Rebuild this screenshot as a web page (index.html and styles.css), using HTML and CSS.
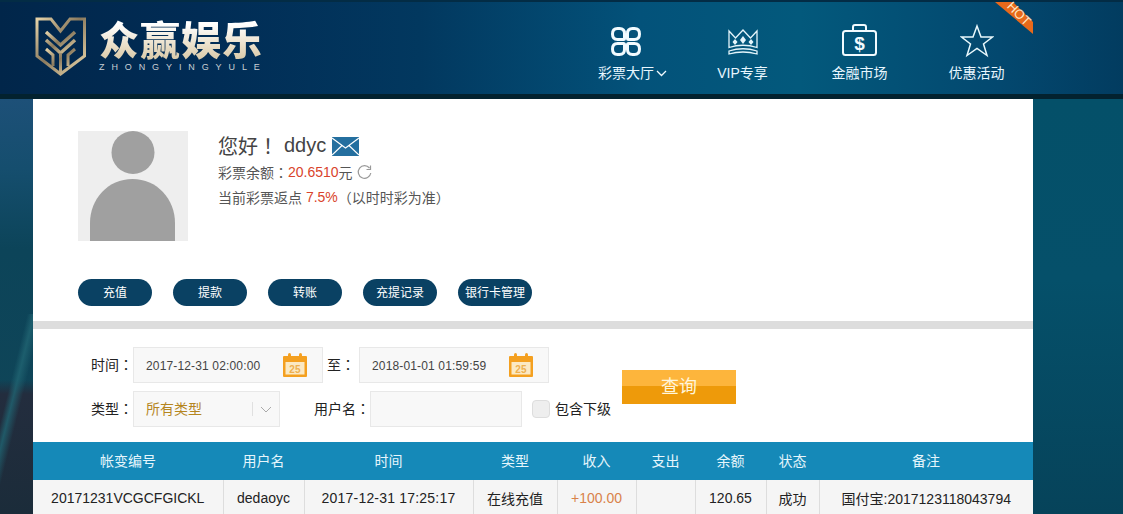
FILE: index.html
```html
<!DOCTYPE html>
<html lang="zh-CN">
<head>
<meta charset="utf-8">
<title>众赢娱乐</title>
<link rel="stylesheet" href="styles.css">
</head>
<body>
<div class="page">
  <header class="header">
    <div class="logo">
      <svg class="logo-mark" width="52" height="60" viewBox="0 0 52 60">
        <defs>
          <linearGradient id="gold" x1="0" y1="0" x2="1" y2="1">
            <stop offset="0" stop-color="#e6d3a8"/>
            <stop offset=".45" stop-color="#8a7a5e"/>
            <stop offset="1" stop-color="#efdcae"/>
          </linearGradient>
        </defs>
        <path d="M2 2H16L25.500 14L35 2H49.500V39L25.500 57L2 39Z" fill="none" stroke="url(#gold)" stroke-width="3"/>
        <path d="M11 15L25.500 28L40 15M11 23L25.500 36L40 23" fill="none" stroke="url(#gold)" stroke-width="3.500"/>
        <path d="M11 32L18 38V49M40 32L33 38V49M25.500 36V56" fill="none" stroke="url(#gold)" stroke-width="3"/>
      </svg>
      <div class="logo-text">
        <div class="logo-name">众赢娱乐</div>
        <div class="logo-sub">ZHONGYINGYULE</div>
      </div>
    </div>
    <nav class="nav">
      <a class="nav-item">
        <svg class="nav-icon" width="34" height="34" viewBox="0 0 34 34">
          <g fill="none" stroke="#f2fbff" stroke-width="3">
            <path d="M8.500 4.500H10.500Q15.500 4.500 15.500 9.500V14.500Q15.500 15.500 14.500 15.500H8.500Q3.500 15.500 3.500 10Q3.500 4.500 8.500 4.500Z"/>
            <path d="M25.500 4.500H23.500Q18.500 4.500 18.500 9.500V14.500Q18.500 15.500 19.500 15.500H25.500Q30.500 15.500 30.500 10Q30.500 4.500 25.500 4.500Z"/>
            <path d="M8.500 30.500H10.500Q15.500 30.500 15.500 25.500V20.500Q15.500 19.500 14.500 19.500H8.500Q3.500 19.500 3.500 25Q3.500 30.500 8.500 30.500Z"/>
            <path d="M25.500 30.500H23.500Q18.500 30.500 18.500 25.500V20.500Q18.500 19.500 19.500 19.500H25.500Q30.500 19.500 30.500 25Q30.500 30.500 25.500 30.500Z"/>
          </g>
        </svg>
        <span class="nav-label nav-label-caret">彩票大厅<svg class="caret" width="11" height="7" viewBox="0 0 11 7"><path d="M1 1L5.500 5.500L10 1" fill="none" stroke="#f2fbff" stroke-width="1.300"/></svg></span>
      </a>
      <a class="nav-item">
        <svg class="nav-icon" width="34" height="34" viewBox="0 0 34 34">
          <g fill="none" stroke="#e4f5fb" stroke-width="1.300">
            <path d="M3 7L9.500 14L17 6L24.500 14L31 7V23.500Q17 19 3 23.500Z"/>
            <path d="M3 27Q17 22.500 31 27V30Q17 26 3 30Z"/>
          </g>
          <g fill="#e4f5fb">
            <path d="M17 12L20 16L17 20L14 16Z"/>
            <path d="M9 15L11.500 18L9 21L6.500 18Z"/>
            <path d="M25 15L27.500 18L25 21L22.500 18Z"/>
          </g>
        </svg>
        <span class="nav-label">VIP专享</span>
      </a>
      <a class="nav-item">
        <svg class="nav-icon" width="37" height="34" viewBox="0 0 37 34">
          <g fill="none" stroke="#f2fbff" stroke-width="2">
            <rect x="2" y="7" width="33" height="24" rx="2.500"/>
            <path d="M12 7V3Q12 1 14 1H23Q25 1 25 3V7"/>
          </g>
          <text class="dollar" x="18.500" y="26" text-anchor="middle">$</text>
        </svg>
        <span class="nav-label">金融市场</span>
      </a>
      <a class="nav-item">
        <svg class="nav-icon" width="34" height="34" viewBox="0 0 34 34">
          <path d="M17 2L21 13H32.500L23.500 20L27 31.500L17 24.500L7 31.500L10.500 20L1.500 13H13Z" fill="none" stroke="#e9f8fc" stroke-width="1.500"/>
        </svg>
        <span class="nav-label">优惠活动</span>
      </a>
      <div class="hot"><span class="hot-text">HOT</span></div>
    </nav>
  </header>

  <main class="card">
    <section class="profile">
      <div class="profile-top">
        <svg class="avatar" width="110" height="110" viewBox="0 0 110 110">
          <rect width="110" height="110" fill="#eeeeee"/>
          <circle cx="55" cy="21.500" r="21.500" fill="#a0a0a0"/>
          <path d="M12 110V92C12 68 30 48 54.500 48C79 48 97 68 97 92V110Z" fill="#a0a0a0"/>
        </svg>
        <div class="info">
          <div class="hello">您好<span class="punct" lang="zh-TW">！</span><span class="uname">ddyc</span>
            <svg class="mail" width="27" height="19" viewBox="0 0 27 19">
              <rect width="27" height="19" fill="#246f9f"/>
              <path d="M0 1L13.500 11L27 1M0 18L10 8.500M27 18L17 8.500" fill="none" stroke="#fff" stroke-width="1.200"/>
            </svg>
          </div>
          <div class="line">彩票余额<span class="punct" lang="zh-TW">：</span><span class="red">20.6510</span>元<svg class="refresh" width="15" height="15" viewBox="0 0 15 15"><path d="M12.500 3A6.300 6.300 0 1 0 13.800 8" fill="none" stroke="#999" stroke-width="1.200"/><path d="M13.500 0.500V4.500H9.500" fill="none" stroke="#999" stroke-width="1.200"/></svg></div>
          <div class="line">当前彩票返点 <span class="red">7.5%</span><span class="punct" lang="zh-TW">（</span>以时时彩为准<span class="punct" lang="zh-TW">）</span></div>
        </div>
      </div>
      <div class="actions">
        <a class="pill">充值</a>
        <a class="pill">提款</a>
        <a class="pill">转账</a>
        <a class="pill">充提记录</a>
        <a class="pill">银行卡管理</a>
      </div>
    </section>

    <section class="filter">
      <div class="filter-rows">
        <div class="row">
          <label class="lbl lbl-sm">时间<span class="punct" lang="zh-TW">：</span></label>
          <div class="field date">
            <span>2017-12-31 02:00:00</span>
            <svg class="cal" width="28" height="28" viewBox="0 0 28 28"><rect x="2" y="5" width="24" height="21" fill="#f4a020" rx="1"/><rect x="4.500" y="11" width="19" height="12.500" fill="#fbe9c4"/><rect x="7" y="2" width="3" height="6" rx="1.500" fill="#f4a020"/><rect x="18" y="2" width="3" height="6" rx="1.500" fill="#f4a020"/><text class="cal-num" x="14" y="22" text-anchor="middle">25</text></svg>
          </div>
          <label class="lbl lbl-to">至<span class="punct" lang="zh-TW">：</span></label>
          <div class="field date">
            <span>2018-01-01 01:59:59</span>
            <svg class="cal" width="28" height="28" viewBox="0 0 28 28"><rect x="2" y="5" width="24" height="21" fill="#f4a020" rx="1"/><rect x="4.500" y="11" width="19" height="12.500" fill="#fbe9c4"/><rect x="7" y="2" width="3" height="6" rx="1.500" fill="#f4a020"/><rect x="18" y="2" width="3" height="6" rx="1.500" fill="#f4a020"/><text class="cal-num" x="14" y="22" text-anchor="middle">25</text></svg>
          </div>
        </div>
        <div class="row">
          <label class="lbl lbl-sm">类型<span class="punct" lang="zh-TW">：</span></label>
          <div class="field select">
            <span class="select-val">所有类型</span>
            <span class="select-arrow"><svg width="12" height="7" viewBox="0 0 12 7"><path d="M1 1L6 6L11 1" fill="none" stroke="#aaa" stroke-width="1"/></svg></span>
          </div>
          <label class="lbl lbl-user">用户名<span class="punct" lang="zh-TW">：</span></label>
          <div class="field user"></div>
          <span class="check"></span>
          <span class="check-text">包含下级</span>
        </div>
      </div>
      <button class="search">查询</button>
    </section>

    <table class="tbl">
      <colgroup>
        <col class="c1"><col class="c2"><col class="c3"><col class="c4"><col class="c5"><col class="c6"><col class="c7"><col class="c8"><col class="c9">
      </colgroup>
      <thead>
        <tr><th>帐变编号</th><th>用户名</th><th>时间</th><th>类型</th><th>收入</th><th>支出</th><th>余额</th><th>状态</th><th>备注</th></tr>
      </thead>
      <tbody>
        <tr><td>20171231VCGCFGICKL</td><td>dedaoyc</td><td class="td-time">2017-12-31 17:25:17</td><td>在线充值</td><td class="income">+100.00</td><td></td><td>120.65</td><td>成功</td><td>国付宝:2017123118043794</td></tr>
      </tbody>
    </table>
  </main>
</div>
</body>
</html>
```
FILE: styles.css
```css
* { box-sizing: border-box; }
html, body { margin: 0; padding: 0; }
body {
  font-family: "Liberation Sans", "Noto Sans CJK SC", sans-serif;
  font-size: 14px;
  color: #333;
  background-color: #06506a;
}
.punct { font-family: "Noto Sans CJK TC", sans-serif; }
.page {
  height: 514px;
  overflow: hidden;
  background:
    linear-gradient(104deg, transparent 33%, rgba(32, 100, 114, .8) 41%, transparent 52%) 0 314px / 33px 200px no-repeat,
    linear-gradient(180deg, rgba(35, 45, 62, 0) 0, #232d3e 14px, #1b2c3a 100%) 0 380px / 33px 134px no-repeat,
    linear-gradient(180deg, #1d5078 0, #154e6e 70px, #0c4459 150px, #0f4558 100%) 0 99px / 33px 300px no-repeat,
    linear-gradient(180deg, #045069 0, #05506a 180px, #06435a 100%) 33px 99px / 1090px 415px no-repeat;
}

/* Header */
.header {
  height: 99px;
  display: flex;
  justify-content: space-between;
  border-top: 2px solid #032c45;
  border-bottom: 5px solid #03222f;
  background: linear-gradient(90deg, #01264a 0, #012c55 200px, #02385f 420px, #03527a 640px, #03597c 800px, #03486f 1000px, #023c60 100%);
}
.logo { display: flex; padding: 15px 0 0 35px; }
.logo-mark { flex: none; }
.logo-text { margin-left: 12px; margin-top: -2px; }
.logo-name {
  width: 170px;
  font-family: "Noto Sans CJK SC", sans-serif;
  font-weight: 900;
  font-size: 40px;
  line-height: 46px;
  letter-spacing: 1px;
  white-space: nowrap;
  background: linear-gradient(180deg, #ffffff 20%, #e8dcc4 70%, #d8c8a6 100%);
  -webkit-background-clip: text;
  background-clip: text;
  color: transparent;
}
.logo-sub {
  font-size: 9px;
  line-height: 10px;
  margin-top: 1px;
  letter-spacing: 6.900px;
  color: #c9cfd4;
  white-space: nowrap;
}
.nav { position: relative; display: flex; padding: 22px 0 0; margin-right: 88px; }
.nav-item { width: 117px; display: flex; flex-direction: column; align-items: center; color: #e8f7ff; }
.nav-icon { display: block; height: 34px; }
.nav-label { display: flex; align-items: center; margin-top: 5px; font-size: 14px; line-height: 20px; white-space: nowrap; }
.nav-label-caret { margin-left: 14px; }
.caret { margin-left: 2px; }
.dollar { font: bold 19px "Liberation Sans", sans-serif; fill: #f2fbff; }
.hot {
  position: absolute;
  top: 0;
  right: 2px;
  width: 38px;
  height: 32px;
}
.hot::before {
  content: "";
  position: absolute;
  inset: 0;
  background: #e8691b;
  clip-path: polygon(0 0, 18px 0, 38px 20px, 38px 32px);
}
.hot-text {
  position: absolute;
  top: 5px;
  left: 10px;
  font-size: 13px;
  line-height: 14px;
  color: #ffe9c9;
  transform: rotate(45deg);
}

/* Card */
.card { width: 1000px; margin-left: 33px; background: #fff; height: 415px; }
.profile { padding: 32px 45px 15px; }
.profile-top { display: flex; gap: 30px; }
.avatar { display: block; flex: none; }
.hello { display: flex; align-items: center; height: 28px; font-size: 20px; color: #444; white-space: pre; }
.uname { font-size: 20px; margin-left: 6px; }
.mail { margin-left: 6px; margin-top: 2px; }
.line { display: flex; align-items: center; height: 25px; font-size: 14px; color: #555; white-space: pre; }
.red { color: #d9432b; }
.refresh { margin: 2px 0 0 4px; }
.actions { display: flex; gap: 21px; margin-top: 38px; }
.pill {
  width: 74px;
  height: 27px;
  border-radius: 14px;
  background: #0a4163;
  color: #fff;
  font-size: 12px;
  line-height: 29px;
  text-align: center;
  white-space: nowrap;
}

/* Filter */
.filter {
  display: flex;
  align-items: center;
  border-top: 8px solid #dddddd;
  padding: 18px 0 15px 58px;
}
.filter-rows { width: 520px; display: flex; flex-direction: column; gap: 8px; }
.row { display: flex; align-items: center; height: 36px; }
.lbl { flex: none; color: #222; font-size: 14px; white-space: nowrap; padding-bottom: 3px; }
.lbl-sm { width: 42px; }
.lbl-to { width: 32px; margin-left: 4px; }
.lbl-user { width: 56px; margin-left: 34px; }
.field { flex: none; height: 36px; background: #f8f8f8; border: 1px solid #e8e8e8; }
.date { width: 190px; display: flex; align-items: center; justify-content: space-between; padding: 1px 13px 0 12px; font-size: 12px; letter-spacing: .15px; color: #444; }
.cal { display: block; margin-top: -2px; }
.cal-num { font: bold 10px "Liberation Sans", sans-serif; fill: #eeb04f; }
.select { width: 147px; display: flex; align-items: center; padding-left: 12px; }
.select-val { width: 106px; color: #b5861f; font-size: 14px; padding-bottom: 2px; }
.select-arrow { flex: 1; height: 14px; display: flex; align-items: center; justify-content: center; border-left: 1px solid #e0e0e0; }
.user { width: 152px; }
.check { flex: none; width: 18px; height: 18px; margin-left: 10px; background: #eeeeee; border: 1px solid #dddddd; border-radius: 4px; }
.check-text { margin-left: 5px; color: #222; font-size: 14px; white-space: nowrap; padding-bottom: 2px; }
.search {
  width: 114px;
  height: 34px;
  margin-left: 11px;
  border: 0;
  padding: 0 0 5px;
  background: linear-gradient(180deg, #fdb53c 0, #fdb53c 16px, #ee9a0a 16px, #ee9a0a 100%);
  color: #fff6dc;
  font-family: inherit;
  font-size: 18px;
}

/* Table */
.tbl { width: 1000px; table-layout: fixed; border-collapse: collapse; }
.c1 { width: 190px; } .c2 { width: 81px; } .c3 { width: 169px; } .c4 { width: 84px; }
.c5 { width: 79px; } .c6 { width: 59px; } .c7 { width: 71px; } .c8 { width: 53px; } .c9 { width: 214px; }
.tbl th { height: 38px; padding: 0 0 2px; background: #1589b8; color: #e6f6fc; font-size: 14px; font-weight: normal; }
.tbl td { height: 36px; padding: 0; background: #f5f5f5; border-left: 1px solid #dddddd; color: #222; font-size: 14px; text-align: center; white-space: nowrap; }
.tbl td:first-child { border-left: 0; }
.tbl .td-time { letter-spacing: .2px; }
.tbl .income { color: #d9824a; }
```
